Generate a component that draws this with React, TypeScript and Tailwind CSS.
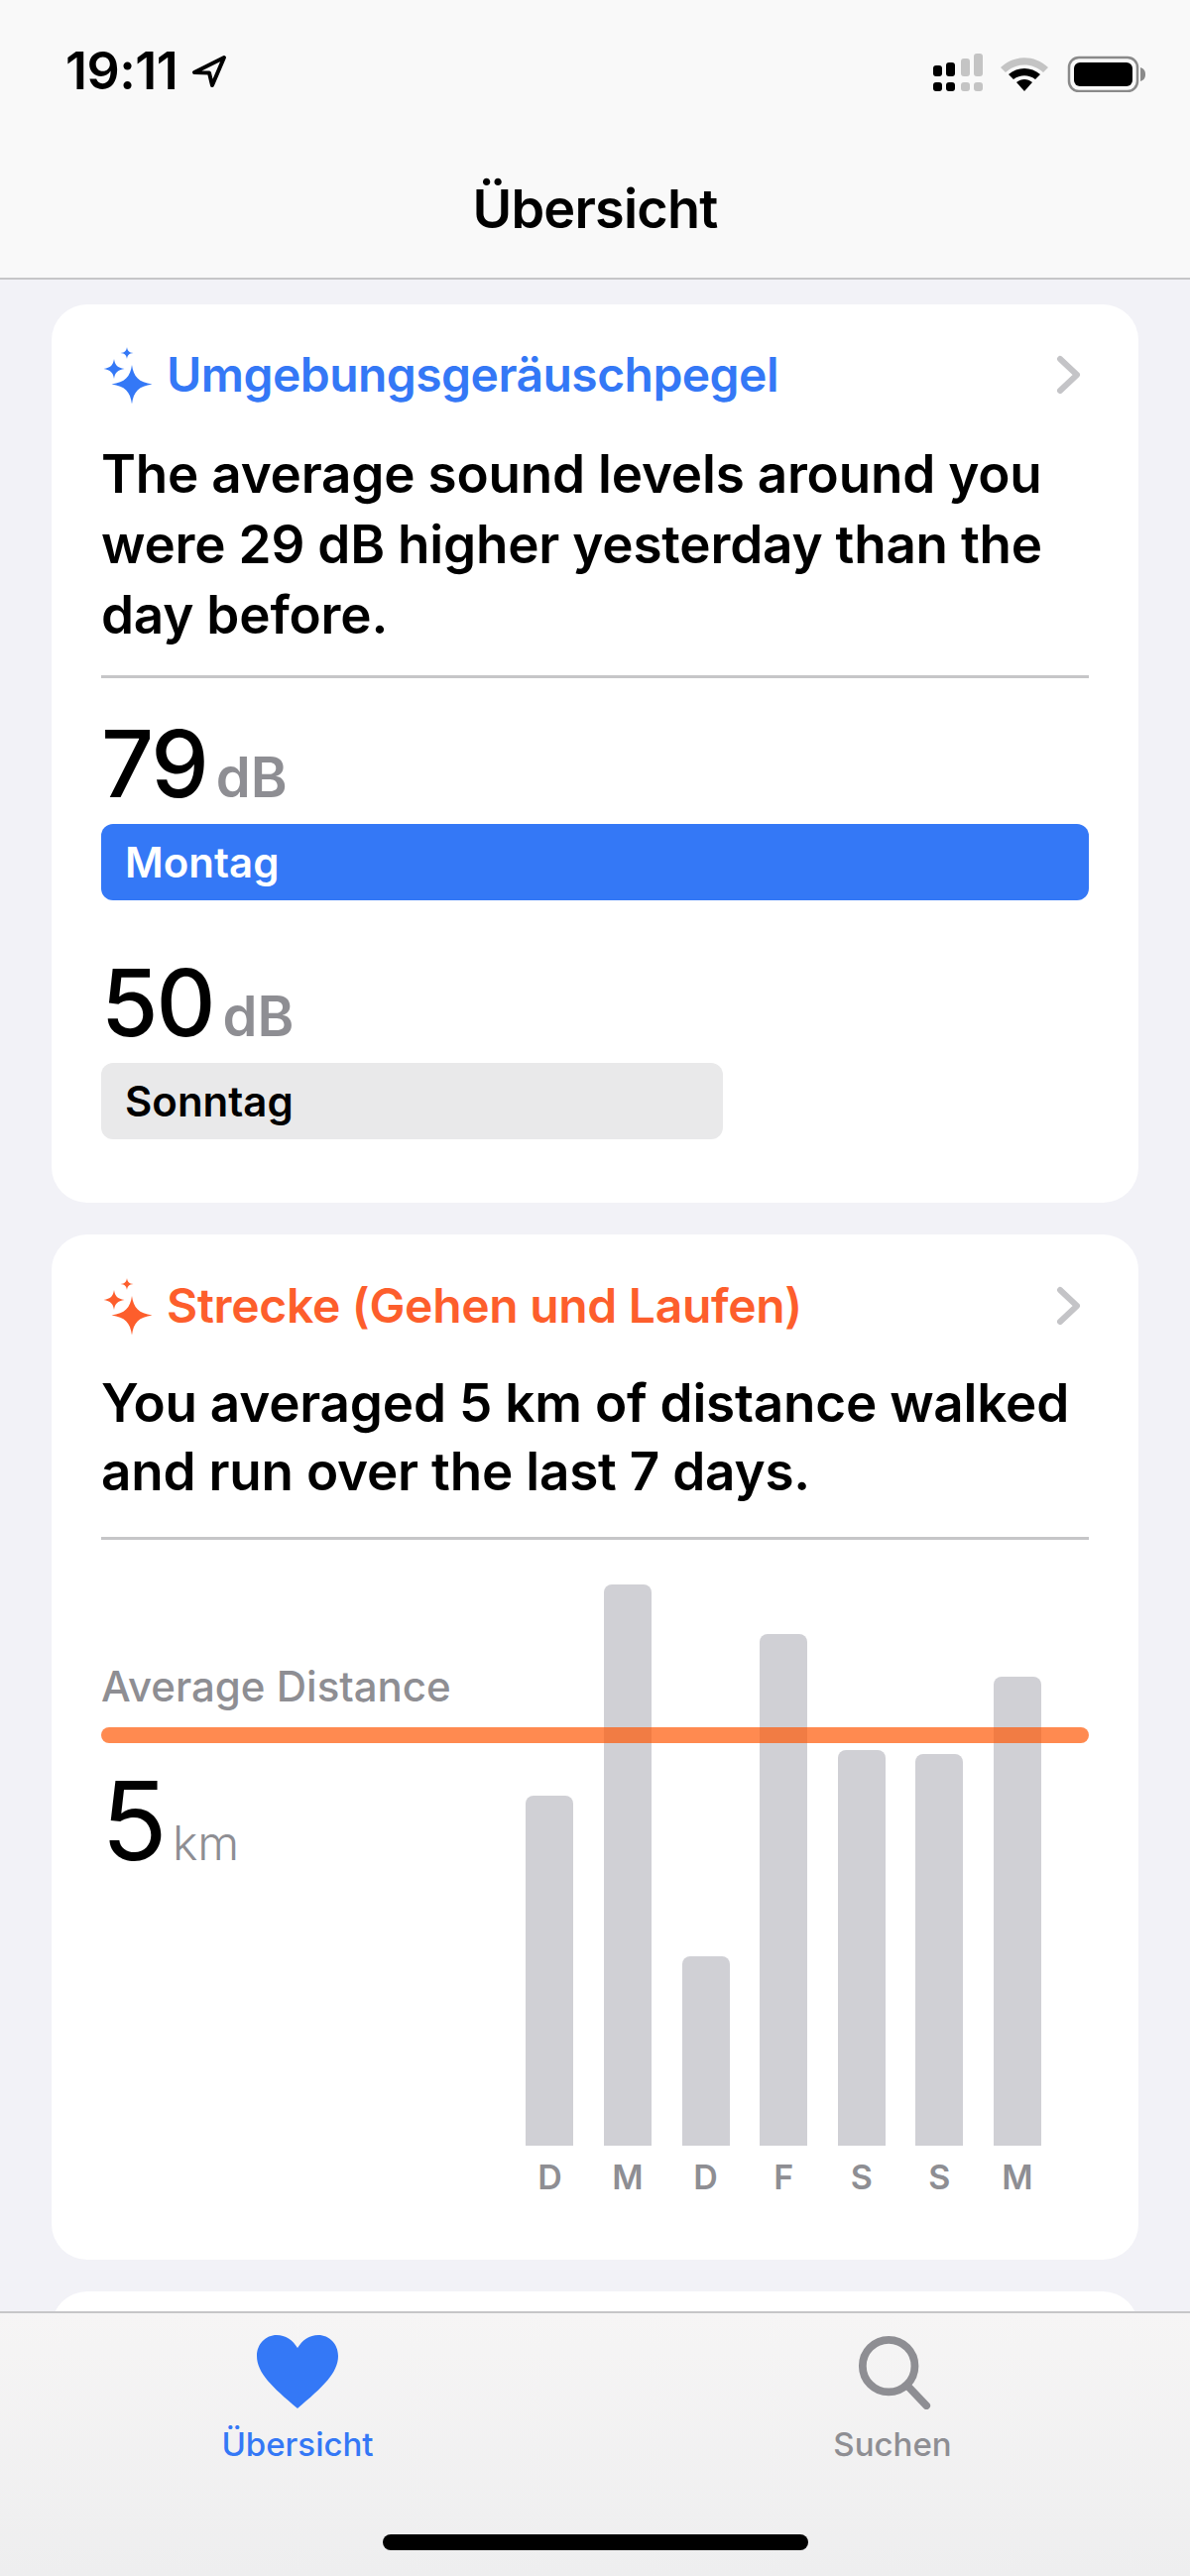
const bars = [
  { day: 'D', height: 353 },
  { day: 'M', height: 566 },
  { day: 'D', height: 191 },
  { day: 'F', height: 516 },
  { day: 'S', height: 399 },
  { day: 'S', height: 395 },
  { day: 'M', height: 473 },
];

function Sparkles({ className }: { className: string }) {
  return (
    <svg viewBox="0 0 54 58" className={className} fill="currentColor">
      <path d="M33 18c1.6 12 7 17.600 20.500 19.500C40 39.400 34.600 45 33 57.500 31.400 45 26 39.400 12.500 37.500 26 35.600 31.400 30 33 18Z" />
      <path d="M15 12c.8 6 3.500 9 10.500 10C18.500 23 15.800 26 15 32c-.8-6-3.500-9-10.500-10C11.500 21 14.200 18 15 12Z" />
      <path d="M28 0c.5 3.800 2.200 5.500 6.500 6C30.200 6.500 28.500 8.200 28 12c-.5-3.800-2.200-5.500-6.500-6C25.800 5.500 27.500 3.800 28 0Z" />
    </svg>
  );
}

function Chevron() {
  return (
    <svg viewBox="0 0 26 40" className="h-[40px] w-[26px] text-[#c4c4c7]" fill="none" stroke="currentColor" strokeWidth="6" strokeLinecap="round" strokeLinejoin="round">
      <path d="M4 4l17 16L4 36" />
    </svg>
  );
}

function CardHeader({ title, color }: { title: string; color: string }) {
  return (
    <div className={`flex h-[60px] items-center justify-between pr-[7px] ${color}`}>
      <div className="flex items-center gap-[14px]">
        <Sparkles className="mt-[2px] h-[58px] w-[54px] -ml-[2px]" />
        <span className="text-[48px] font-semibold">{title}</span>
      </div>
      <Chevron />
    </div>
  );
}

function Level({ value, unit, day, active }: { value: string; unit: string; day: string; active?: boolean }) {
  return (
    <div>
      <div className="flex h-[90px] items-baseline gap-[9px]">
        <span className="text-[93px] leading-[90px] font-medium tracking-[-2px] text-black">{value}</span>
        <span className="text-[56px] leading-[52px] font-semibold text-[#8e8e93]">{unit}</span>
      </div>
      <div
        className={`mt-[16px] flex h-[77px] items-center rounded-[12px] pl-[24px] text-[42px] font-semibold ${
          active ? 'w-full bg-[#3478f6] text-white' : 'w-[627px] bg-[#e9e9ea] text-black'
        }`}
      >
        {day}
      </div>
    </div>
  );
}

function StatusBar() {
  return (
    <div className="flex h-[150px] items-start justify-between pt-[46px] pl-[66px] pr-[43px]">
      <div className="flex items-center gap-[14px]">
        <span className="text-[52px] leading-[52px] font-semibold tracking-[-0.5px] text-black">19:11</span>
        <svg viewBox="0 0 36 34" className="h-[34px] w-[36px]" fill="none" stroke="black" strokeWidth="4" strokeLinejoin="round">
          <path d="M33 3 3 18l15 .5L21 31 33 3Z" />
        </svg>
      </div>
      <svg viewBox="0 0 216 40" className="mt-[7px] h-[40px] w-[216px]">
        <rect x="0" y="13" width="9" height="11" rx="3" fill="black" />
        <rect x="13" y="10" width="9" height="14" rx="3" fill="black" />
        <rect x="28" y="6" width="9" height="18" rx="3" fill="#c4c4c4" />
        <rect x="41" y="1" width="9" height="23" rx="3" fill="#c4c4c4" />
        <rect x="0" y="30" width="9" height="9" rx="3" fill="black" />
        <rect x="13" y="30" width="9" height="9" rx="3" fill="black" />
        <rect x="28" y="30" width="9" height="9" rx="3" fill="#c4c4c4" />
        <rect x="41" y="30" width="9" height="9" rx="3" fill="#c4c4c4" />
        <path d="M68 15c14-13 34-13 48 0l-5 5c-11-10-27-10-38 0Z" fill="#c4c4c4" />
        <path d="M76 22c9-8 23-8 32 0l-5 5c-7-5-15-5-22 0Z" fill="black" />
        <path d="M84 30c5-4 11-4 16 0l-8 9Z" fill="black" />
        <rect x="137" y="5" width="69" height="34" rx="10" fill="none" stroke="#8a8a8a" strokeWidth="2.500" />
        <rect x="142" y="10" width="59" height="24" rx="6" fill="black" />
        <path d="M209 15c3 1 5 3 5 7s-2 6-5 7Z" fill="#8a8a8a" />
      </svg>
    </div>
  );
}

export default function App() {
  return (
    <div className="flex h-[2598px] w-[1200px] flex-col overflow-hidden bg-[#f2f2f7] font-['Inter',sans-serif]">
      <header className="h-[282px] shrink-0 border-b-[2px] border-[#c6c6c8] bg-[#f9f9f9]">
        <StatusBar />
        <h1 className="mt-[31px] text-center text-[54px] leading-[60px] font-semibold tracking-[-0.8px] text-black">Übersicht</h1>
      </header>

      <main className="flex-1 overflow-hidden px-[52px] pt-[25px]">
        <section className="h-[906px] rounded-[36px] bg-white px-[50px] pt-[41px]">
          <CardHeader title="Umgebungsgeräuschpegel" color="text-[#3478f6] tracking-[-0.55px]" />
          <p className="mt-[35px] text-[53px] leading-[71px] font-semibold tracking-[-0.2px] text-black">
            The average sound levels around you were 29 dB higher yesterday than the day before.
          </p>
          <div className="mt-[25px] h-[3px] bg-[#c6c6c8]" />
          <div className="mt-[41px] flex flex-col gap-[58px]">
            <Level value="79" unit="dB" day="Montag" active />
            <Level value="50" unit="dB" day="Sonntag" />
          </div>
        </section>

        <section className="mt-[32px] h-[1034px] rounded-[36px] bg-white px-[50px] pt-[42px]">
          <CardHeader title="Strecke (Gehen und Laufen)" color="text-[#fd5e2c] tracking-[-0.3px]" />
          <p className="mt-[34px] text-[53px] leading-[69px] font-semibold tracking-[-0.2px] text-black">
            You averaged 5 km of distance walked and run over the last 7 days.
          </p>
          <div className="mt-[31px] h-[3px] bg-[#c6c6c8]" />

          <div className="relative mt-[44px] flex h-[625px] justify-between">
            <div className="pt-[80px]">
              <div className="text-[42px] leading-[48px] font-medium text-[#8e8e93]">Average Distance</div>
              <div className="mt-[58px] flex items-baseline gap-[5px]">
                <span className="text-[110px] leading-[107px] font-normal text-black">5</span>
                <span className="text-[48px] leading-[44px] font-light text-[#8e8e93]">km</span>
              </div>
            </div>
            <div className="mr-[48px] flex h-[619px] gap-[30.600px]">
              {bars.map((bar, i) => (
                <div key={i} className="flex w-[48px] flex-col items-center justify-end">
                  <div className="w-[48px] rounded-t-[8px] bg-[#d0d0d5]" style={{ height: bar.height }} />
                  <span className="mt-[12px] h-[40px] text-[34px] leading-[40px] font-semibold text-[#8e8e93]">{bar.day}</span>
                </div>
              ))}
            </div>
            <div className="absolute inset-x-0 top-[145px] h-[16px] rounded-full bg-[#ff5805]/70" />
          </div>
        </section>

        <section className="mt-[32px] h-[200px] rounded-[36px] bg-white" />
      </main>

      <nav className="relative h-[267px] shrink-0 border-t-[2px] border-[#c6c6c8] bg-gradient-to-b from-[#f6f5f5] to-[#eeeeef]">
        <div className="flex">
          <div className="flex w-[600px] flex-col items-center pt-[22px] text-[#3478f6]">
            <svg viewBox="0 0 82 74" className="h-[74px] w-[82px]" fill="currentColor">
              <path d="M41 74C15 52 0 38 0 21 0 9 9 0 20 0c9 0 16 5 21 13C46 5 53 0 62 0c11 0 20 9 20 21 0 17-15 31-41 53Z" />
            </svg>
            <span className="mt-[16px] text-[33px] leading-[40px] font-medium">Übersicht</span>
          </div>
          <div className="flex w-[600px] flex-col items-center pt-[21px] text-[#8e8e93]">
            <svg viewBox="0 0 78 78" className="ml-[4px] h-[76px] w-[76px]" fill="none" stroke="currentColor" strokeWidth="8" strokeLinecap="round">
              <circle cx="33" cy="33" r="27" />
              <path d="M52 53l20 21" />
            </svg>
            <span className="mt-[15px] text-[33px] leading-[40px] font-medium">Suchen</span>
          </div>
        </div>
        <div className="absolute bottom-[26px] left-[386px] h-[16px] w-[429px] rounded-full bg-black" />
      </nav>
    </div>
  );
}
